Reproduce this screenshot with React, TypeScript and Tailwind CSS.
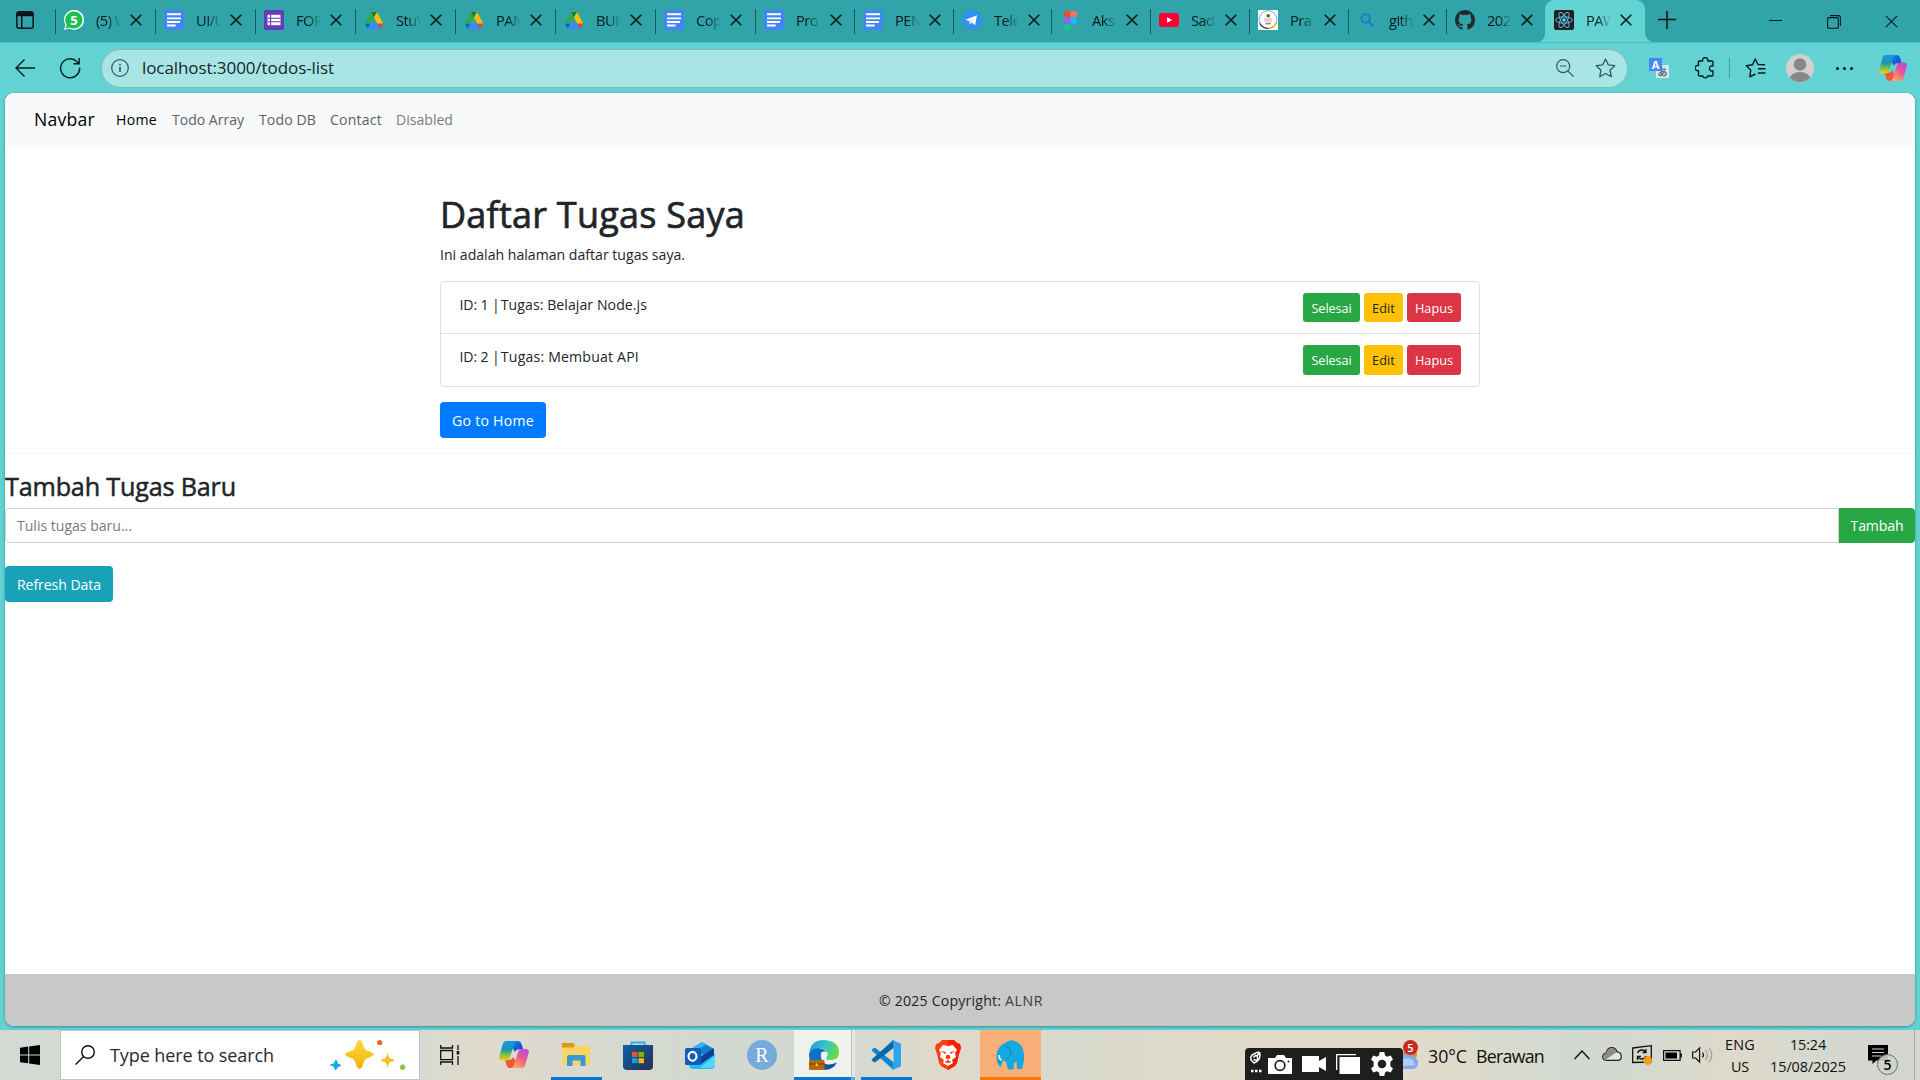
import { useLayoutEffect, useRef, useState } from "react";
import type { ReactNode } from "react";

/* Text whose tracking is adjusted so that its advance equals w pixels. */
function Fit({ w, className = "", children }: { w: number; className?: string; children: string }) {
  const ref = useRef<HTMLSpanElement>(null);
  const [ls, setLs] = useState(0);
  useLayoutEffect(() => {
    const el = ref.current;
    if (el) setLs((w - el.getBoundingClientRect().width) / children.length);
  }, []);
  return (
    <span ref={ref} className={"inline-block whitespace-pre " + className} style={{ letterSpacing: ls + "px" }}>
      {children}
    </span>
  );
}

function XIcon({ s = 12, sw = 1.6 }: { s?: number; sw?: number }) {
  return (
    <svg width={s} height={s} viewBox="0 0 12 12" fill="none" stroke="#0b1a1a" strokeWidth={sw} className="block shrink-0">
      <path d="M0.7 0.7 11.3 11.3M11.3 0.7 0.7 11.3" />
    </svg>
  );
}

const WhatsApp = () => (
  <div className="relative size-5">
    <svg viewBox="0 0 20 20" className="block size-5">
      <path d="M0 20 1.4 14.8A10 10 0 1 1 5.3 18.6Z" fill="#fff" />
      <path d="M1.5 18.5 2.6 14.7A8.6 8.6 0 1 1 5.4 17.4Z" fill="#1fc14c" />
    </svg>
    <span className="absolute inset-0 text-center text-[13px] font-bold leading-5 text-white">5</span>
  </div>
);
const Docs = () => (
  <svg viewBox="0 0 20 20" className="block size-5">
    <rect width="20" height="20" rx="2" fill="#4285f4" />
    <path d="M3 4.2h14M3 8.400h14M3 12h13M3 15.400h8.600" stroke="#fff" strokeWidth="2" />
    <path d="M3 6.300h14M3 10.200h14" stroke="#4285f4" strokeWidth="1.3" />
  </svg>
);
const Forms = () => (
  <svg viewBox="0 0 20 20" className="block size-5">
    <rect width="20" height="20" rx="1.6" fill="#673ab7" />
    <path d="M3.5 4.8h13v10.4h-13z" fill="#fff" />
    <path d="M3.5 8.2h13M3.5 11.8h13M6.6 4.8v10.4" stroke="#673ab7" strokeWidth="1.1" />
  </svg>
);
const Drive = () => (
  <svg viewBox="0 0 87.3 78" className="block h-[17px] w-[18px]" preserveAspectRatio="none">
    <path d="m6.6 66.85 3.85 6.65c.8 1.4 1.95 2.5 3.3 3.3L27.5 53H0c0 1.55.4 3.1 1.2 4.5z" fill="#0066da" />
    <path d="M43.65 25 29.9 1.2c-1.35.8-2.5 1.9-3.3 3.3L1.2 48.5A9 9 0 0 0 0 53h27.5z" fill="#34a853" />
    <path d="M73.55 76.8c1.35-.8 2.5-1.9 3.3-3.3l1.6-2.75L86.1 57.5c.8-1.4 1.2-2.95 1.2-4.5H59.8l5.85 11.5z" fill="#ea4335" />
    <path d="M43.65 25 57.4 1.2C56.05.4 54.5 0 52.9 0H34.4c-1.6 0-3.15.45-4.5 1.2z" fill="#188038" />
    <path d="M59.8 53H27.5L13.75 76.8c1.35.8 2.9 1.2 4.5 1.2h50.8c1.6 0 3.15-.45 4.5-1.2z" fill="#4285f4" />
    <path d="m73.4 26.5-12.7-22c-.8-1.4-1.95-2.5-3.3-3.3L43.65 25l16.15 28h27.45c0-1.55-.4-3.1-1.2-4.5z" fill="#ffba00" />
  </svg>
);
const Telegram = () => (
  <svg viewBox="0 0 20 20" className="block size-5">
    <circle cx="10" cy="10" r="10" fill="#3390ec" />
    <path d="M3.6 9.8 15 5.2 13.1 15.2 9.6 12.6 7.8 14.3 7.4 11.3Z" fill="#fff" />
    <path d="M7.4 11.3 12.6 7.6 9 12.2 7.8 14.3Z" fill="#c9e1fb" />
  </svg>
);
const Figma = () => (
  <svg viewBox="0 0 13 19" className="block h-[19px] w-[13px]">
    <path d="M3.2 0H6.5V6.3H3.2a3.15 3.15 0 0 1 0-6.3" fill="#f24e1e" />
    <path d="M6.5 0h3.3a3.15 3.15 0 0 1 0 6.3H6.5z" fill="#ff7262" />
    <path d="M3.2 6.3h3.3v6.4H3.2a3.15 3.15 0 0 1 0-6.4" fill="#a259ff" />
    <circle cx="9.7" cy="9.5" r="3.2" fill="#1abcfe" />
    <path d="M3.2 12.7h3.3v3.1a3.2 3.2 0 1 1-3.3-3.1" fill="#0acf83" />
  </svg>
);
const YouTube = () => (
  <svg viewBox="0 0 20 14" className="block h-[14px] w-5">
    <rect width="20" height="14" rx="3" fill="#ff0033" />
    <path d="M8 4.2 13.2 7 8 9.8Z" fill="#fff" />
  </svg>
);
const Crest = () => (
  <svg viewBox="0 0 20 20" className="block size-5">
    <rect width="20" height="20" fill="#fff" />
    <circle cx="10" cy="9.6" r="9" fill="#fff" stroke="#7fa9e0" strokeWidth="1" />
    <path d="M2 13.5a9 9 0 0 0 8 4.8" stroke="#2b2b2b" strokeWidth="1.3" fill="none" />
    <path d="M10 18.3a9 9 0 0 0 8.4-6" stroke="#e8a91c" strokeWidth="1.3" fill="none" />
    <circle cx="10.2" cy="5.7" r="1.8" fill="#3d7a2a" />
    <path d="M6 9h8M6.4 11h7.4" stroke="#e79b97" strokeWidth="1.2" />
    <path d="M7.4 13.6h5.4" stroke="#7d8f87" strokeWidth="1.6" />
  </svg>
);
const BlueSearch = () => (
  <svg viewBox="0 0 14 14" className="block size-[14px]" fill="none" stroke="#1a78d0" strokeWidth="1.9">
    <circle cx="5.6" cy="5.4" r="4.2" />
    <path d="m8.7 8.5 4.3 4.5" />
  </svg>
);
const GitHub = () => (
  <svg viewBox="0 0 16 16" className="block size-5" fill="#24292f">
    <path d="M8 0C3.58 0 0 3.58 0 8c0 3.54 2.29 6.53 5.47 7.59.4.07.55-.17.55-.38 0-.19-.01-.82-.01-1.49-2.01.37-2.53-.49-2.69-.94-.09-.23-.48-.94-.82-1.13-.28-.15-.68-.52-.01-.53.63-.01 1.08.58 1.23.82.72 1.21 1.87.87 2.33.66.07-.52.28-.87.51-1.07-1.78-.2-3.64-.89-3.64-3.95 0-.87.31-1.59.82-2.15-.08-.2-.36-1.02.08-2.12 0 0 .67-.21 2.2.82a7.6 7.6 0 0 1 4 0c1.53-1.04 2.2-.82 2.2-.82.44 1.1.16 1.92.08 2.12.51.56.82 1.27.82 2.15 0 3.07-1.87 3.75-3.65 3.95.29.25.54.73.54 1.48 0 1.07-.01 1.93-.01 2.2 0 .21.15.46.55.38A8.01 8.01 0 0 0 16 8c0-4.42-3.58-8-8-8" />
  </svg>
);
const ReactLogo = () => (
  <svg viewBox="0 0 20 20" className="block size-5">
    <rect width="20" height="20" rx="2" fill="#222" />
    <g fill="none" stroke="#61c8e6" strokeWidth=".9">
      <ellipse cx="10" cy="10" rx="8.4" ry="3.2" />
      <ellipse cx="10" cy="10" rx="8.4" ry="3.2" transform="rotate(60 10 10)" />
      <ellipse cx="10" cy="10" rx="8.4" ry="3.2" transform="rotate(120 10 10)" />
    </g>
    <circle cx="10" cy="10" r="1.7" fill="#61dafb" />
  </svg>
);
const Copilot = ({ id, className }: { id: string; className: string }) => (
  <svg viewBox="0 0 30 28" className={"block " + className} preserveAspectRatio="none">
    <defs>
      <linearGradient id={id + "a"} x1="0" y1="0" x2="0" y2="1">
        <stop offset="0" stopColor="#1594e8" />
        <stop offset=".45" stopColor="#1c97b0" />
        <stop offset=".75" stopColor="#8cc63c" />
        <stop offset="1" stopColor="#f5cf12" />
      </linearGradient>
      <linearGradient id={id + "b"} x1="1" y1="0" x2=".3" y2="1">
        <stop offset="0" stopColor="#a04df2" />
        <stop offset=".5" stopColor="#ee5593" />
        <stop offset="1" stopColor="#fda85c" />
      </linearGradient>
      <linearGradient id={id + "c"} x1="0" y1="0" x2="1" y2="1">
        <stop offset="0" stopColor="#1b8bea" />
        <stop offset="1" stopColor="#1238c8" />
      </linearGradient>
    </defs>
    <path d="M14 0h5q2.6 0 3.4 2.6L24.200 8.500H20q-3 0-4 3L12 5Z" fill={`url(#${id}c)`} />
    <path d="M16 28h-5q-2.600 0-3.400-2.600L6 19.500h4q3 0 4-3L18 22Z" fill="#ee5a3a" />
    <path d="M7.500 0H18q-2 .3-3 3.500L11 17q-1 3-4 3H3.500Q-.8 20 .4 15.500L3.600 4Q4.600 0 7.500 0Z" fill={`url(#${id}a)`} />
    <path d="M22.500 28H12q2-.3 3-3.500L19 11.500q1-3.300 4-3.300h3.500Q30.800 8.200 29.600 12.700L26.400 24q-1 4-3.900 4Z" fill={`url(#${id}b)`} />
  </svg>
);

const tabs: { w: string; icon: ReactNode; t: string }[] = [
  { w: "w-[100px]", icon: <WhatsApp />, t: "(5) W" },
  { w: "w-[100px]", icon: <Docs />, t: "UI/U" },
  { w: "w-[100px]", icon: <Forms />, t: "FOR" },
  { w: "w-[100px]", icon: <Drive />, t: "StuV" },
  { w: "w-[100px]", icon: <Drive />, t: "PAN" },
  { w: "w-[100px]", icon: <Drive />, t: "BUK" },
  { w: "w-[100px]", icon: <Docs />, t: "Cop" },
  { w: "w-[99px]", icon: <Docs />, t: "Pro" },
  { w: "w-[99px]", icon: <Docs />, t: "PEN" },
  { w: "w-[98px]", icon: <Telegram />, t: "Tele" },
  { w: "w-[99px]", icon: <Figma />, t: "Aks" },
  { w: "w-[99px]", icon: <YouTube />, t: "Sad" },
  { w: "w-[99px]", icon: <Crest />, t: "Pra" },
  { w: "w-[98px]", icon: <BlueSearch />, t: "gith" },
  { w: "w-[99px]", icon: <GitHub />, t: "202" },
];

function TabBody({ icon, t }: { icon: ReactNode; t: string }) {
  return (
    <>
      <div className="flex h-5 w-5 shrink-0 items-center justify-center">{icon}</div>
      <span className="ml-3 w-[25px] shrink-0 overflow-hidden whitespace-nowrap text-[14.600px] leading-5 tracking-[-0.5px] text-[#0b1a1a] [mask-image:linear-gradient(to_right,#000_45%,transparent)]">
        {t}
      </span>
      <div className="ml-[9px]">
        <XIcon />
      </div>
    </>
  );
}

function TabStrip() {
  return (
    <div className="flex h-[42px] bg-[#30a4a8]">
      <div className="flex w-[55px] shrink-0 pl-4 pt-[11px]">
        <svg width="18" height="18" viewBox="0 0 18 18" fill="none" stroke="#0b1515" strokeWidth="1.5">
          <rect x=".8" y=".8" width="16.400" height="16.400" rx="2.500" />
          <path d="M1 3.200h16" strokeWidth="4" />
          <path d="M5.700 5v12" />
        </svg>
      </div>
      {tabs.map((tab, i) => (
        <div key={i} className={"flex shrink-0 " + tab.w}>
          <div className="mt-[9px] h-[25px] w-px shrink-0 bg-[#17585c]" />
          <div className="flex h-10 items-center pl-2">
            <TabBody icon={tab.icon} t={tab.t} />
          </div>
        </div>
      ))}
      <div className="-ml-[8px] flex h-[42px] w-[8px] shrink-0 bg-[#62d2d3]">
        <div className="h-full w-full rounded-br-[9px] bg-[#30a4a8]" />
      </div>
      <div className="flex h-[42px] w-[100px] shrink-0 rounded-t-[9px] bg-[#62d2d3]">
        <div className="flex h-10 items-center pl-[9px]">
          <TabBody icon={<ReactLogo />} t="PAW" />
        </div>
      </div>
      <div className="h-[42px] w-[9px] shrink-0 bg-[#62d2d3]">
        <div className="h-full w-full rounded-bl-[9px] bg-[#30a4a8]" />
      </div>
      <svg width="18" height="18" viewBox="0 0 18 18" stroke="#0b1515" strokeWidth="1.500" className="ml-[4px] mt-[11px] shrink-0">
        <path d="M9 0v18M0 8.500h18" />
      </svg>
      <div className="ml-auto flex h-[43px] items-center pr-[22px]">
        <div className="mb-[2px] mr-[45px] h-px w-[13px] bg-[#0b1515]" />
        <svg width="14" height="14" viewBox="0 0 14 14" fill="none" stroke="#0b1515" strokeWidth="1.100" className="mr-[44px]">
          <rect x=".6" y="2.600" width="10.700" height="10.700" rx="1" />
          <path d="M3 .6h8.500q1.900 0 1.900 1.900V11" />
        </svg>
        <XIcon s={13} sw={1} />
      </div>
    </div>
  );
}

function Toolbar() {
  return (
    <div className="flex h-[51px] items-center border-t border-[#4dbcc0] bg-[#62d2d3]">
      <svg width="20" height="18" viewBox="0 0 20 18" fill="none" stroke="#0b1a1a" strokeWidth="1.400" className="ml-[15px] shrink-0">
        <path d="M20 9H1M9.500 .6 1 9l8.500 8.400" />
      </svg>
      <svg width="22" height="22" viewBox="0 0 22 22" fill="none" stroke="#0b1a1a" strokeWidth="1.400" className="ml-6 shrink-0">
        <path d="M20.600 10.500a9.500 9.500 0 1 1-2.800-6L20 6.500M20.200 1v5.700h-5.700" />
      </svg>
      <div className="ml-[20px] flex h-[39px] w-[1527px] shrink-0 items-center rounded-full border border-[#89b9bb] bg-[#a7e6e4] pl-[9px] pr-[11px]">
        <svg width="18" height="18" viewBox="0 0 18 18" fill="none" stroke="#2f5557" strokeWidth="1.200">
          <circle cx="9" cy="9" r="8.300" />
          <path d="M9 8v5M9 4.700v1.700" strokeWidth="1.600" />
        </svg>
        <div className="ml-[13px] text-[17px] leading-6 text-[#14282a]">
          <Fit w={192}>localhost:3000/todos-list</Fit>
        </div>
        <svg width="18" height="18" viewBox="0 0 18 18" fill="none" stroke="#33595b" strokeWidth="1.200" className="ml-auto mr-[21px]">
          <circle cx="7.200" cy="7.200" r="6.500" />
          <path d="M12 12l5.700 5.700M4 7h6.400" />
        </svg>
        <svg width="21" height="20" viewBox="0 0 21 20" fill="none" stroke="#33595b" strokeWidth="1.300" strokeLinejoin="round">
          <path d="M10.500 1 13.300 6.900 19.800 7.700 15 12.200 16.300 18.700 10.500 15.500 4.700 18.700 6 12.200 1.200 7.700 7.700 6.900Z" />
        </svg>
      </div>
      <div className="relative ml-[21px] h-5 w-5 shrink-0">
        <div className="absolute bottom-0 right-0 flex h-[13px] w-[13px] items-center justify-center bg-[#dfe5e6] text-[10px] font-bold leading-none text-[#546e7a] [font-family:'Noto_Sans_CJK_JP',sans-serif]">あ</div>
        <div className="absolute left-0 top-0 flex h-[13px] w-[13px] items-center justify-center bg-[#4688f4] text-[11px] font-bold leading-none text-white">A</div>
      </div>
      <svg width="20" height="22" viewBox="0 0 20 22" fill="none" stroke="#0b1a1a" strokeWidth="1.400" strokeLinejoin="round" className="ml-[26px] shrink-0">
        <path d="M3.500 4h4.100a2.700 2.700 0 1 1 5.200 0H17q1 0 1 1v4a2.600 2.600 0 1 0 0 4.800V18q0 1-1 1h-4.300a2.600 2.600 0 0 1-5 0H4.500q-1 0-1-1v-4.300a2.700 2.700 0 1 1 0-5.200Z" />
      </svg>
      <div className="ml-[14px] h-5 w-px shrink-0 bg-[#3f9ea0]" />
      <svg width="21" height="20" viewBox="0 0 21 20" fill="none" stroke="#0b1a1a" strokeWidth="1.400" strokeLinejoin="round" className="ml-[15px] shrink-0">
        <path d="M20 6.800 13 6.500 10.200 1 7.500 6.800 1.200 7.700 5.800 12 4.800 18.800 10.500 16M13 10.700h7.500M13 15h7.500" />
      </svg>
      <svg width="28" height="28" viewBox="0 0 28 28" className="ml-[20px] shrink-0">
        <defs>
          <clipPath id="av"><circle cx="14" cy="14" r="14" /></clipPath>
        </defs>
        <g clipPath="url(#av)">
          <rect width="28" height="28" fill="#d2d0ce" />
          <circle cx="14" cy="10.500" r="6.200" fill="#8a8886" />
          <ellipse cx="14" cy="25.500" rx="10.500" ry="7.500" fill="#8a8886" />
        </g>
      </svg>
      <div className="ml-[22px] flex shrink-0 gap-1">
        <div className="size-[3px] rounded-full bg-[#0b1a1a]" />
        <div className="size-[3px] rounded-full bg-[#0b1a1a]" />
        <div className="size-[3px] rounded-full bg-[#0b1a1a]" />
      </div>
      <Copilot id="ct" className="ml-[26px] h-[26px] w-7 shrink-0" />
    </div>
  );
}

const todos = [
  { id: "ID: 1 ", task: " Tugas: Belajar Node.js", w: 150 },
  { id: "ID: 2 ", task: " Tugas: Membuat API", w: 142 },
];

function TodoPage() {
  return (
    <div className="mx-[5px] flex h-[933px] flex-col overflow-hidden rounded-[9px] bg-white text-[14.100px] text-[#212529] shadow-[0_1px_3px_rgba(0,0,0,0.35)]">
      <nav className="flex h-[52px] shrink-0 items-center bg-[#f8f9fb] pl-[29px] leading-[21px]">
        <Fit w={61} className="text-[17.600px] text-black">Navbar</Fit>
        <Fit w={41} className="ml-[21px] text-black">Home</Fit>
        <Fit w={72} className="ml-[15px] text-[#5f6062]">Todo Array</Fit>
        <Fit w={57} className="ml-[15px] text-[#5f6062]">Todo DB</Fit>
        <Fit w={52} className="ml-[14px] text-[#5f6062]">Contact</Fit>
        <Fit w={57} className="ml-[14px] text-[#7a7c7e]">Disabled</Fit>
      </nav>
      <main className="mx-auto w-[1040px] shrink-0 pt-[48px]">
        <h1 className="flex h-[44px] items-center text-[36px] font-medium leading-[44px] [-webkit-text-stroke:0.7px_#212529]">
          <Fit w={305}>Daftar Tugas Saya</Fit>
        </h1>
        <p className="mt-[7px] h-[22px] leading-[22px]">
          <Fit w={245}>Ini adalah halaman daftar tugas saya.</Fit>
        </p>
        <ul className="mt-[15px] rounded-[4px] border border-[#dfdfdf]">
          {todos.map((t, i) => (
            <li key={i} className={"flex items-start justify-between pl-[18.500px] pr-[18px] pt-[11px] " + (i ? "h-[53px] border-t border-[#dfdfdf]" : "h-[51px]")}>
              <span className="mt-px flex h-[22px] leading-[22px]">
                <Fit w={32.5}>{t.id}</Fit>
                <Fit w={5}>|</Fit>
                <Fit w={t.w}>{t.task}</Fit>
              </span>
              <div className={"flex gap-1 text-[12.700px] leading-[30px] text-white " + (i ? "h-[30px]" : "h-[29px]")}>
                <button className="flex w-[57px] justify-center rounded-[3px] bg-[#28a745]"><Fit w={40}>Selesai</Fit></button>
                <button className="flex w-[39px] justify-center rounded-[3px] bg-[#ffc107] text-[#212529]"><Fit w={23}>Edit</Fit></button>
                <button className="flex w-[54px] justify-center rounded-[3px] bg-[#dc3545]"><Fit w={38}>Hapus</Fit></button>
              </div>
            </li>
          ))}
        </ul>
        <button className="mt-[15px] block h-[36px] w-[106px] rounded-[4px] bg-[#007bff] leading-[37px] text-white">
          <Fit w={82}>Go to Home</Fit>
        </button>
      </main>
      <div className="mt-[15px] h-px shrink-0 bg-[#f4f4f4]" />
      <h2 className="mt-[15px] flex h-[34px] shrink-0 items-center text-[25.200px] font-medium leading-[34px] [-webkit-text-stroke:0.5px_#212529]">
        <Fit w={231}>Tambah Tugas Baru</Fit>
      </h2>
      <div className="mt-[5px] flex h-[35px] shrink-0">
        <div className="flex-1 rounded-l-[4px] border border-[#ced4da] pl-[11px] leading-[33px] text-[#757d84]">
          <Fit w={115}>Tulis tugas baru...</Fit>
        </div>
        <button className="w-[76px] rounded-r-[4px] bg-[#28a745] leading-[35px] text-white"><Fit w={53}>Tambah</Fit></button>
      </div>
      <button className="mt-[23px] h-[36px] w-[108px] shrink-0 rounded-[4px] bg-[#17a2b8] leading-[37px] text-white">
        <Fit w={84}>Refresh Data</Fit>
      </button>
      <footer className="mt-auto flex h-[52px] shrink-0 items-center justify-center bg-[#c8c8c8] pl-[2px] pt-[2px] leading-[22px]">
        <Fit w={126}>© 2025 Copyright: </Fit>
        <Fit w={38} className="text-[#3a3c3e]">ALNR</Fit>
      </footer>
    </div>
  );
}

function Taskbar() {
  return (
    <div className="flex h-[50px] bg-[linear-gradient(90deg,#d3dad3_0%,#d3dad3_20%,#e0dbcb_25%,#dcd9cc_28%,#d2d9d1_37%,#d4d9d0_44%,#dfdacb_49%,#d8d9cd_55%,#e0dbca_66%,#e0dbca_74%,#d2d9d0_82%,#d5d9cf_86%,#dedaca_90%,#d6d8cf_95%,#d3d6d0_100%)] text-[#101010]">
      <div className="flex w-[60px] shrink-0 pl-5 pt-[15px]">
        <svg width="20" height="20" viewBox="0 0 20 20" fill="#000">
          <path d="M0 2.800 8.200 1.600V9.400H0zM9.200 1.500 20 0V9.400H9.200zM0 10.400h8.200v7.900L0 17.200zM9.200 10.400H20V20L9.200 18.400z" />
        </svg>
      </div>
      <div className="flex w-[360px] shrink-0 items-center border border-[#c3c3c3] bg-white pl-[14px]">
        <svg width="20" height="20" viewBox="0 0 20 20" fill="none" stroke="#111" strokeWidth="1.400">
          <circle cx="13" cy="7" r="6.300" />
          <path d="M8.600 11.400.6 19.400" />
        </svg>
        <div className="ml-[15px] text-[18px] leading-6 text-[#2a2a2a]">
          <Fit w={164}>Type here to search</Fit>
        </div>
        <svg width="76" height="32" viewBox="0 0 76 32" className="ml-[56px]">
          <defs>
            <linearGradient id="sp" x1="0" y1="0" x2="0" y2="1">
              <stop offset="0" stopColor="#ffd83a" />
              <stop offset="1" stopColor="#eeb412" />
            </linearGradient>
          </defs>
          <path d="M29.500 1q2 0 3 3 1.500 6 4 7.500 6.500 2 7.500 4-1 2-7.500 4-2.500 1.500-4 7.500-1 3-3 3t-3-3q-1.500-6-4-7.500-6.500-2-7.500-4 1-2 7.500-4 2.500-1.500 4-7.500 1-3 3-3Z" fill="url(#sp)" />
          <path d="M57.500 14q1.500 5 2.500 5.500 4 .8 4.500 1.800-.5 1-4.500 1.800-1 .6-2.500 5.400-1.500-4.800-2.500-5.400-4-.8-4.500-1.800.5-1 4.500-1.800 1-.5 2.500-5.500Z" fill="#f3c01f" />
          <path d="m6 21 1.700 4 3.300 1.300-3.500 1.400L5.500 31l-1.300-3.600L.5 26l3.700-1.300Z" fill="#12a9ee" stroke="#12a9ee" strokeWidth="1" />
          <circle cx="49.700" cy="3.500" r="2.600" fill="#f4622c" />
          <circle cx="72.700" cy="28.200" r="2.600" fill="#86c440" />
        </svg>
      </div>
      <svg width="20" height="20" viewBox="0 0 20 20" fill="none" stroke="#111" strokeWidth="1.300" className="ml-5 mt-[15px] shrink-0">
        <path d="M.7 5.500h11.800v9.200H.7zM.7 0v3H12.500V0M.7 20v-3H12.500v3M18 0v5M18 11v9" />
        <path d="M18 6v3.500" strokeWidth="2.600" />
      </svg>
      <Copilot id="cb" className="ml-[39px] mt-[11px] h-[27px] w-[30px] shrink-0" />
      <div className="ml-[22px] flex w-[51px] shrink-0 flex-col items-center border-b-[3px] border-[#0078d7] pt-[13px]">
        <svg width="28" height="24" viewBox="0 0 28 24" className="mr-[2px]">
          <path d="M0 0h11l2 2-1.500 5H0z" fill="#dc9a10" />
          <path d="M0 4.500h11L13 3h15v19H0z" fill="#fcd462" />
          <path d="M5 23v-9q0-2 2-2h14.500q2 0 2 2v9h-5v-5.500h-8V23z" fill="#3b97dc" />
        </svg>
      </div>
      <svg width="30" height="30" viewBox="0 0 30 30" className="ml-[21px] mt-[11px] shrink-0">
        <defs>
          <linearGradient id="st" x1="0" y1="0" x2="1" y2="1">
            <stop offset="0" stopColor="#0a62a8" />
            <stop offset="1" stopColor="#2a2f57" />
          </linearGradient>
        </defs>
        <path d="M8.500 5V1.500h13V5" fill="none" stroke="#27b2ea" strokeWidth="2" />
        <path d="M0 4h30v21q0 4-4 4H4q-4 0-4-4z" fill="url(#st)" />
        <path d="M9 11h5.500v5H9z" fill="#f25022" />
        <path d="M15.500 11H21v5h-5.500z" fill="#7fba00" />
        <path d="M9 17.200h5.500v5H9z" fill="#00a4ef" />
        <path d="M15.500 17.200H21v5h-5.500z" fill="#ffb900" />
      </svg>
      <svg width="30" height="28" viewBox="0 0 30 28" className="ml-[32px] mt-3 shrink-0">
        <path d="M4 8 17 0l12 7v8H4z" fill="#1a7fd2" />
        <path d="M8 5.500 17 0l4 2.400L10 9z" fill="#35b5ee" />
        <path d="M4 12h26v11q0 4-4 4H9q-5 0-5-4z" fill="#22bdf0" />
        <path d="M12 17 29 6v7L16 22z" fill="#123f96" />
        <path d="M15 26 30 13.500V23q0 3-3 3z" fill="#4fd8fb" />
        <rect y="6" width="16" height="17" rx="1.500" fill="#0f5fb8" />
        <ellipse cx="7.500" cy="14.300" rx="4" ry="4.400" fill="none" stroke="#fff" strokeWidth="2.100" />
      </svg>
      <div className="ml-[32px] mt-[10px] flex size-[30px] shrink-0 items-center justify-center rounded-full bg-[#75aadb] text-[20px] leading-none text-white [font-family:'Liberation_Serif',serif]">R</div>
      <div className="ml-[17px] flex w-[57px] shrink-0 flex-col items-center border-b-[3px] border-[#0078d7] bg-[#f0f1ed] pt-[10px]">
        <svg width="30" height="30" viewBox="0 0 30 30" className="ml-[3px]">
          <defs>
            <linearGradient id="ed" x1="0" y1="0" x2="1" y2=".4">
              <stop offset="0" stopColor="#1b9de2" />
              <stop offset=".55" stopColor="#34c3c6" />
              <stop offset="1" stopColor="#62dc4e" />
            </linearGradient>
          </defs>
          <path d="M0 16Q0 0 15 0 30 1 30 12.500q0 7.500-8.500 7.500-5.500 0-4-2.500 2-2 1-4.500-2-4-7-5Q4 7 0 16Z" fill="url(#ed)" />
          <path d="M0 15Q2 8 9 8q6 .5 8 4-6-2-5 5 1 8 9 9.500-5 3.500-12 2.500Q0 27 0 15Z" fill="#0f6fc4" />
          <path d="M12 21q5 6 16 1.500Q24 30 15 30q-5 0-8-3Z" fill="#12509e" />
          <rect y="20" width="15.500" height="10" rx="1" fill="#b56a08" />
          <path d="M0 24h15.500" stroke="#7f4605" strokeWidth="1.200" />
          <rect x="6.700" y="23.500" width="2" height="2.500" fill="#ffcc33" />
        </svg>
      </div>
      <div className="w-[4px] shrink-0 border-b-[3px] border-l border-b-[#5fa4dd] border-l-[#b9bbb5] bg-[#e7e8e1]" />
      <div className="ml-[6px] flex w-[51px] shrink-0 flex-col items-center border-b-[3px] border-[#0078d7] pt-[10px]">
        <svg width="30" height="30" viewBox="0 0 100 100" className="mr-[2px]">
          <path d="M3 32 9 27q3-2 6 0L76 75v23q-3 0-6-3L3 36q-2-2 0-4Z" fill="#1484cf" />
          <path d="M3 68q-2-2 0-4L70 4q3-3 6-3v25L15 73q-3 2-6 0z" fill="#0b68ac" />
          <path d="M74 1 97 11q3 2 3 5v68q0 3-3 5L74 99q-4 1-7-2 7 3 8-5V8q-1-8-8-5 3-3 7-2Z" fill="#2fa5ef" />
        </svg>
      </div>
      <svg width="26" height="30" viewBox="0 0 26 30" className="ml-[23px] mt-[10px] shrink-0">
        <path d="M7 0h12l3 3 3 1 1 4-2 6-2 9-2 3-7 4-7-4-2-3-2-9-2-6 1-4 3-1z" fill="#fb4019" />
        <path d="M13 0h6l3 3 3 1 1 4-2 6-2 9-2 3-7 4z" fill="#ff2000" />
        <path d="m8 5 5 1 5-1 4 5-2 3 1 4-4 3 1 3-5 3-5-3 1-3-4-3 1-4-2-3z" fill="#fff" />
        <path d="m6 11 5 1-1 2zM20 11l-5 1 1 2zM11.500 15h3l1 3-2.500 1.500L10.500 18zM9.500 22l3.500-2 3.500 2-3.500 1z" fill="#fb3412" />
      </svg>
      <div className="ml-[19px] flex w-[61px] shrink-0 flex-col items-center border-b-[3px] border-[#ff7500] bg-[#f8b078] pt-[10px]">
        <svg width="28" height="30" viewBox="0 0 28 30" className="mr-[2px]">
          <path d="M9 3q6-5 12-1 6 3 7 12 .5 8-2 15h-5l-.5-7-2.500 1-.5 6.500h-5.500L10 22l-3-2-2 7-2.500-2Q-.5 19 .5 14 2 6 9 3Z" fill="#15a9e1" />
          <path d="M9 6q5 1 6 6 0 5-5 7M4 14l-1 9" fill="none" stroke="#1784b8" strokeWidth="1" />
          <path d="M3 15q0 4 2.500 5" fill="none" stroke="#fff" strokeWidth="1.700" />
        </svg>
      </div>
      <div className="ml-[204px] mt-[18px] flex h-8 w-[158px] shrink-0 items-start rounded-t-[4px] bg-[#1e1e1e] pl-[5px]">
        <svg width="12" height="24" viewBox="0 0 12 24" className="mt-[3px] shrink-0" fill="none" stroke="#fff">
          <path d="M1 9Q0 4 5 2.500 10-.5 10 4 10 10 4 12L1 9M3.500 6.500q3-4 4 0t-4 2M7 5l3-4" strokeWidth="1.500" />
          <path d="M1 20h2.500M5 20h2.500M9 20h2.500" strokeWidth="2.500" />
        </svg>
        <svg width="24" height="19" viewBox="0 0 24 19" className="ml-[6px] mt-[7px] shrink-0">
          <path d="M0 3h7l2-3h7l2 3h6v16H0z" fill="#fff" />
          <circle cx="12" cy="10.500" r="4.800" fill="#fff" stroke="#1e1e1e" strokeWidth="1.700" />
          <circle cx="20.500" cy="6.500" r="1" fill="#1e1e1e" />
        </svg>
        <svg width="24" height="16" viewBox="0 0 24 16" className="ml-[10px] mt-[8px] shrink-0" fill="#fff">
          <path d="M0 0h17v5l7-4v14l-7-4v5H0z" />
        </svg>
        <svg width="24" height="20" viewBox="0 0 24 20" className="ml-[10px] mt-[6px] shrink-0">
          <path d="M.6 16V.6H20" fill="none" stroke="#fff" strokeWidth="1.400" />
          <path d="M3.500 3H24v17H3.500z" fill="#fff" />
        </svg>
        <svg width="24" height="24" viewBox="0 0 24 24" className="ml-[10px] mt-[4px] shrink-0">
          <path fill="#fff" fillRule="evenodd" d="M9.700 0h4.600l.7 3.400 2.300 1.300 3.400-1.100L23 7.500l-2.600 2.300v4.400L23 16.500l-2.300 3.900-3.400-1.100-2.300 1.300-.7 3.400H9.700L9 20.600l-2.300-1.300-3.400 1.100L1 16.500l2.600-2.300V9.800L1 7.500l2.300-3.900 3.400 1.100L9 3.400zM12 7.700a4.300 4.300 0 1 0 0 8.600 4.300 4.300 0 0 0 0-8.600" />
        </svg>
      </div>
      <div className="relative h-[50px] w-[25px] shrink-0">
        <svg width="16" height="30" viewBox="0 0 16 30" className="absolute left-0 top-[10px]">
          <circle cx="7" cy="14" r="7" fill="#f28a1d" />
          <path d="M0 16q3-5 8-3 4 2 4 5 3 1 3 5 0 6-6 6H0z" fill="#83a9ee" />
          <path d="M0 19q6-2 10 1l2 5-12 1z" fill="#b4cdf8" />
        </svg>
        <div className="absolute left-0 top-[10px] size-[15px] rounded-full bg-[#c52b1e] text-center text-[11px] font-semibold leading-[15px] text-white">5</div>
      </div>
      <div className="flex h-[50px] shrink-0 items-center pt-[1px] text-[17.800px] leading-6">
        <Fit w={39}>30°C</Fit>
        <Fit w={68} className="ml-[9px]">Berawan</Fit>
      </div>
      <svg width="16" height="10" viewBox="0 0 16 10" fill="none" stroke="#111" strokeWidth="1.400" className="ml-[30px] mt-[20px] shrink-0">
        <path d="M.5 9 8 1l7.500 8" />
      </svg>
      <svg width="20" height="14" viewBox="0 0 20 14" className="ml-3 mt-[17px] shrink-0">
        <path d="M4.500 13.300q-3.800 0-3.800-3.500Q1 6.500 4 6.200 5.500.7 9.700.7q4 0 5.300 4.200 4.300.3 4.300 4.500 0 3.900-3.900 3.900Z" fill="#e4e4e2" stroke="#222" strokeWidth="1.200" />
        <path d="M4 6.200Q5.500 1.300 9.700 1.300q3.600 0 4.700 3.900L4.500 12Q1.300 12 1.300 9.500 1.300 6.500 4 6.200" fill="#8b8b8b" />
      </svg>
      <svg width="21" height="20" viewBox="0 0 21 20" fill="none" stroke="#111" strokeWidth="1.300" className="ml-[10px] mt-[15px] shrink-0">
        <path d="M.7 3 19.300.7V17L.7 17.500zM5.500 8q1-3 4.500-3 2.500 0 3.500 2M14 4v3.500h-3.500M14 11q-1 3-4.500 3-2.500 0-3.500-2M5.500 15v-3.500H9" />
        <circle cx="15.800" cy="15.500" r="4.400" fill="#ff9a12" stroke="none" />
      </svg>
      <svg width="19" height="11" viewBox="0 0 19 11" fill="none" stroke="#111" strokeWidth="1.200" className="ml-[10px] mt-5 shrink-0">
        <path d="M.6.600h16.500v9.800H.600zM18.300 3.500v4" />
        <path d="M2.500 2.500h11.500v6H2.500z" fill="#000" stroke="none" />
      </svg>
      <svg width="21" height="18" viewBox="0 0 21 18" fill="none" stroke="#111" strokeWidth="1.200" className="ml-[10px] mt-4 shrink-0">
        <path d="M.6 6h3l4-4v14l-4-4h-3zM10.500 6.500q2 2.500 0 5" />
        <path d="M13.500 4.200q4 4.800 0 9.600M16.800 1.500q6 7.500 0 15" stroke="#9d9f98" />
      </svg>
      <div className="ml-[6px] flex w-[42px] shrink-0 flex-col items-center pt-[4px] text-[14.400px] leading-[22px]">
        <Fit w={30}>ENG</Fit>
        <Fit w={18}>US</Fit>
      </div>
      <div className="ml-[1px] flex w-[92px] shrink-0 flex-col items-center pt-[4px] text-[14.400px] leading-[22px]">
        <Fit w={36}>15:24</Fit>
        <Fit w={76}>15/08/2025</Fit>
      </div>
      <div className="relative ml-[14px] mt-[15px] h-[30px] w-[32px] shrink-0">
        <svg width="20" height="19" viewBox="0 0 20 19">
          <path d="M0 0h20v15.500H8.500L4.500 19v-3.500H0z" fill="#000" />
          <path d="M4 4h12M4 7.500h12M4 11h9" stroke="#d6d8cf" strokeWidth="1.100" />
        </svg>
        <div className="absolute left-[9px] top-[9px] size-[21px] rounded-full border border-[#6c6d6a] bg-[#cfd1cb]/90 text-center text-[14px] font-semibold leading-[19px] text-black">5</div>
      </div>
      <div className="ml-auto mr-[5px] w-px bg-[#a5a8a2]" />
    </div>
  );
}

export default function App() {
  return (
    <div className="flex h-[1080px] w-[1920px] flex-col overflow-hidden bg-[#62d2d3] font-['Open_Sans','Noto_Sans',sans-serif]">
      <TabStrip />
      <Toolbar />
      <TodoPage />
      <div className="h-1 shrink-0" />
      <Taskbar />
    </div>
  );
}
